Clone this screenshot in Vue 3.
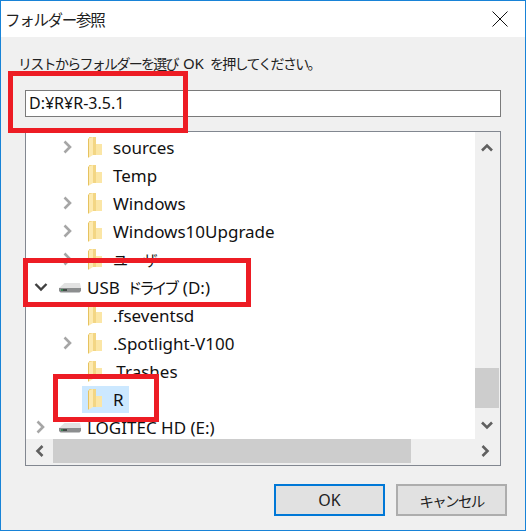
<template>
  <div class="dialog">
    <div class="title-bar">
      <span class="title">フォルダー参照</span>
      <svg class="close" width="16" height="16" viewBox="0 0 16 16">
        <path d="M0.5 0.5L15.5 15.5M15.5 0.5L0.5 15.5" stroke="#111" fill="none" />
      </svg>
    </div>

    <div class="body">
      <p class="hint">リストからフォルダーを選び<span class="latin">OK</span>を押してください。</p>
      <div class="path-input">D:¥R¥R-3.5.1</div>

      <div class="tree-box">
        <div class="tree-main">
          <div class="tree-rows">
            <div v-for="row in rows" :key="row.label" class="row" :class="'lv' + row.level">
              <span class="twist">
                <svg v-if="row.twist === 'closed'" width="12" height="14" viewBox="0 0 12 14">
                  <path d="M2.500 1.500L8 7l-5.500 5.500" fill="none" stroke="#a6a6a6" stroke-width="2.600" />
                </svg>
                <svg v-else-if="row.twist === 'open'" width="14" height="12" viewBox="0 0 14 12">
                  <path d="M1.500 3l5.500 5.500L12.500 3" fill="none" stroke="#404040" stroke-width="2.400" />
                </svg>
              </span>
              <span class="item" :class="{ selected: row.selected }">
                <svg v-if="row.drive" class="drive" width="24" height="14" viewBox="0 0 24 14">
                  <path d="M1 8L6.500 3H22L23 8z" fill="#e2e2e2" />
                  <path d="M1 8H23V11L21.500 12.500H2.500L1 11z" fill="#8c8e8f" />
                  <path d="M3 9.200H9V10.800H3z" fill="#2f3a34" />
                  <path d="M3 9.200H5V10.800H3z" fill="#3c9a5a" />
                </svg>
                <svg v-else class="folder" width="14" height="22" viewBox="0 0 14 22">
                  <path d="M1 1H8V8H14V19H1z" fill="#f3d684" />
                  <path d="M8 8H14V19H8z" fill="#fbe6a6" />
                  <path d="M1 2.500L5 1V19L1 21.500z" fill="#fdeab0" />
                  <path d="M0.500 2.500V21.500" stroke="#e6c25f" fill="none" />
                </svg>
                <span class="label" :class="{ narrow: row.narrow }">{{ row.label }}</span>
                <span v-if="row.kana" class="kana">{{ row.kana }}</span>
                <span v-if="row.tail" class="label">{{ row.tail }}</span>
              </span>
            </div>
          </div>
          <div class="v-scroll">
            <svg width="12" height="10" viewBox="0 0 12 10">
              <path d="M1 7.500l5-5 5 5" fill="none" stroke="#606060" stroke-width="2.600" />
            </svg>
            <div class="v-track"><div class="v-thumb"></div></div>
            <svg width="12" height="10" viewBox="0 0 12 10">
              <path d="M1 2.500l5 5 5-5" fill="none" stroke="#606060" stroke-width="2.600" />
            </svg>
          </div>
        </div>
        <div class="h-scroll">
          <svg width="10" height="12" viewBox="0 0 10 12">
            <path d="M7.500 1l-5 5 5 5" fill="none" stroke="#606060" stroke-width="2.600" />
          </svg>
          <div class="h-track"><div class="h-thumb"></div></div>
          <svg width="10" height="12" viewBox="0 0 10 12">
            <path d="M2.500 1l5 5-5 5" fill="none" stroke="#606060" stroke-width="2.600" />
          </svg>
        </div>
      </div>

      <div class="buttons">
        <button class="btn ok">OK</button>
        <button class="btn cancel">キャンセル</button>
      </div>
    </div>

    <!-- red annotation boxes drawn over the screenshot -->
    <div class="mark mark-path"></div>
    <div class="mark mark-drive"></div>
    <div class="mark mark-r"></div>
  </div>
</template>

<script setup>
const rows = [
  { label: 'sources', level: 1, twist: 'closed' },
  { label: 'Temp', level: 1 },
  { label: 'Windows', level: 1, twist: 'closed' },
  { label: 'Windows10Upgrade', level: 1, twist: 'closed' },
  { label: 'ユーザー', level: 1, twist: 'closed', narrow: true },
  { label: 'USB', kana: 'ドライブ', tail: '(D:)', level: 0, twist: 'open', drive: true },
  { label: '.fseventsd', level: 1 },
  { label: '.Spotlight-V100', level: 1, twist: 'closed' },
  { label: '.Trashes', level: 1 },
  { label: 'R', level: 1, selected: true },
  { label: 'LOGITEC HD (E:)', level: 0, twist: 'closed', drive: true }
];
</script>

<style>
html,
body {
  margin: 0;
  background: #fff;
}
</style>

<style scoped>
.dialog {
  position: relative;
  width: 526px;
  height: 531px;
  box-sizing: border-box;
  border: 1px solid #1883d7;
  display: flex;
  flex-direction: column;
  overflow: hidden;
  font-family: "Noto Sans CJK JP", "Noto Sans", sans-serif;
  color: #000;
}

.title-bar {
  height: 36px;
  flex-shrink: 0;
  background: #fff;
  display: flex;
  align-items: center;
  justify-content: space-between;
  padding: 0 17px 0 4px;
}

.title {
  font-size: 15.5px;
  letter-spacing: -1.3px;
  color: #222;
}

.close {
  display: block;
}

.body {
  flex: 1;
  min-height: 0;
  background: #f0f0f0;
  padding: 18px 24px 0;
  display: flex;
  flex-direction: column;
}

.hint {
  margin: 0 0 0 -7px;
  height: 17px;
  line-height: 17px;
  font-size: 14px;
  letter-spacing: -1.7px;
  color: #222;
  white-space: nowrap;
}

.latin {
  margin: 0 6px 0 5px;
  font-family: "Noto Sans", sans-serif;
  font-size: 15px;
  letter-spacing: 0;
}

.path-input {
  margin-top: 18px;
  height: 27px;
  box-sizing: border-box;
  border: 1px solid #7a7a7a;
  background: #fff;
  padding-left: 3px;
  line-height: 25px;
  font-family: "Noto Sans", sans-serif;
  font-size: 16px;
  color: #111;
}

.tree-box {
  margin-top: 14px;
  height: 335px;
  box-sizing: border-box;
  border: 1px solid #828790;
  background: #f0f0f0;
  display: flex;
  flex-direction: column;
}

.tree-main {
  flex: 1;
  min-height: 0;
  display: flex;
}

.tree-rows {
  flex: 1;
  min-width: 0;
  background: #fff;
  padding-top: 1px;
  overflow: hidden;
}

.row {
  height: 28px;
  display: flex;
  align-items: center;
  font-family: "Noto Sans", "Noto Sans CJK JP", sans-serif;
  font-size: 17px;
  color: #111;
  white-space: nowrap;
}

.twist {
  width: 20px;
  height: 20px;
  display: flex;
  align-items: center;
  justify-content: center;
  flex-shrink: 0;
}

.lv0 {
  padding-left: 5px;
}

.lv1 {
  padding-left: 32px;
}

.lv1 .twist {
  padding-right: 4px;
}

.item {
  display: flex;
  align-items: center;
  height: 27px;
}

.lv1 .item {
  padding: 0 5px 0 6px;
}

.lv0 .item {
  padding-left: 7px;
}

.selected {
  background: #cce8ff;
}

.folder {
  flex-shrink: 0;
  margin-right: 11px;
}

.drive {
  flex-shrink: 0;
  margin-right: 5px;
}

.narrow {
  font-size: 15px;
}

.kana {
  margin: 0 6px 0 7px;
  font-family: "Noto Sans CJK JP", sans-serif;
  font-size: 15.5px;
  letter-spacing: -3px;
}

.v-scroll {
  width: 24px;
  margin: 1px 1px 0 0;
  flex-shrink: 0;
  background: #f0f0f0;
  display: flex;
  flex-direction: column;
  align-items: center;
  padding: 10px 0 9px;
  box-sizing: border-box;
}

.v-track {
  flex: 1;
  align-self: stretch;
  padding: 210px 0 0;
  margin: 5px 0;
}

.v-thumb {
  height: 40px;
  background: #cdcdcd;
}

.h-scroll {
  height: 24px;
  margin-bottom: 2px;
  flex-shrink: 0;
  display: flex;
  align-items: center;
  padding: 0 10px 0 9px;
  background: #f0f0f0;
}

.h-track {
  flex: 1;
  align-self: stretch;
  padding: 0 43px 0 8px;
}

.h-thumb {
  height: 100%;
  margin-right: 26px;
  background: #cdcdcd;
}

.buttons {
  margin-top: 18px;
  display: flex;
  justify-content: flex-end;
  gap: 11px;
  margin-right: -6px;
}

.btn {
  width: 111px;
  height: 32px;
  border: 1px solid #adadad;
  outline: 1px solid #adadad;
  outline-offset: -2px;
  background: #e1e1e1;
  font-family: "Noto Sans", sans-serif;
  font-size: 16px;
  color: #222;
  padding: 0;
}

.ok {
  border-color: #0078d7;
  outline-color: #0078d7;
}

.cancel {
  font-family: "Noto Sans CJK JP", sans-serif;
  font-size: 14.5px;
  letter-spacing: -1.7px;
}

.mark {
  position: absolute;
  box-sizing: border-box;
  border: 5px solid #ed1c24;
  pointer-events: none;
}

.mark-path {
  left: 7px;
  top: 70px;
  width: 180px;
  height: 62px;
}

.mark-drive {
  left: 22px;
  top: 257px;
  width: 228px;
  height: 49px;
}

.mark-r {
  left: 52px;
  top: 373px;
  width: 106px;
  height: 48px;
}
</style>
